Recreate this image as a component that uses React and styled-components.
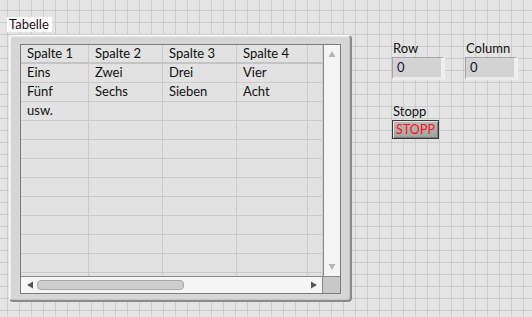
import styled, { createGlobalStyle } from "styled-components";

const GlobalStyle = createGlobalStyle`
  html, body {
    margin: 0;
    padding: 0;
  }
  body {
    width: 532px;
    height: 317px;
    overflow: hidden;
    background-color: #e4e4e4;
    background-image:
      linear-gradient(to right, #cdcdcd 1px, transparent 1px),
      linear-gradient(to bottom, #cdcdcd 1px, transparent 1px);
    background-size: 12px 12px;
    background-position: 7px 10px;
    font-family: Lato, "Liberation Sans", sans-serif;
    font-size: 13px;
    color: #111;
  }
`;

const columns = ["Spalte 1", "Spalte 2", "Spalte 3", "Spalte 4"];
const rows = [
  ["Eins", "Zwei", "Drei", "Vier"],
  ["Fünf", "Sechs", "Sieben", "Acht"],
  ["usw.", "", "", ""],
  ...Array.from({ length: 9 }, () => ["", "", "", ""]),
];
const widths = [68, 74, 74, 71, 15];

export default function App() {
  return (
    <Panel>
      <GlobalStyle />
      <TableColumn>
        <Caption>Tabelle</Caption>
        <Frame>
          <Inner>
            <Body>
              <Cells>
                <Row $header>
                  {widths.map((w, i) => (
                    <Cell key={i} style={{ width: w }}>{columns[i] || ""}</Cell>
                  ))}
                </Row>
                {rows.map((r, ri) => (
                  <Row key={ri}>
                    {widths.map((w, i) => (
                      <Cell key={i} style={{ width: w }}>{r[i] || ""}</Cell>
                    ))}
                  </Row>
                ))}
              </Cells>
              <VScroll>
                <Arrow viewBox="0 0 8 8" width="8" height="8" $c="#b4b4b4">
                  <path d="M4 1 L7.5 7 L0.5 7 Z" />
                </Arrow>
                <Arrow viewBox="0 0 8 8" width="8" height="8" $c="#b4b4b4">
                  <path d="M0.5 1 L7.5 1 L4 7 Z" />
                </Arrow>
              </VScroll>
            </Body>
            <Bottom>
              <HScroll>
                <Arrow viewBox="0 0 8 8" width="8" height="8" $c="#555">
                  <path d="M1 4 L7 0.5 L7 7.5 Z" />
                </Arrow>
                <Thumb />
                <Spacer />
                <Arrow viewBox="0 0 8 8" width="8" height="8" $c="#555">
                  <path d="M7 4 L1 0.5 L1 7.5 Z" />
                </Arrow>
              </HScroll>
              <Corner />
            </Bottom>
          </Inner>
        </Frame>
      </TableColumn>

      <Controls>
        <Indicators>
          <Field>
            <Label>Row</Label>
            <NumBox>0</NumBox>
          </Field>
          <Field>
            <Label>Column</Label>
            <NumBox>0</NumBox>
          </Field>
        </Indicators>
        <Field $top={23}>
          <Label>Stopp</Label>
          <StopButton>STOPP</StopButton>
        </Field>
      </Controls>
    </Panel>
  );
}

const Panel = styled.div`
  display: flex;
  align-items: flex-start;
  padding: 17px 0 0 7px;
`;

const TableColumn = styled.div`
  display: flex;
  flex-direction: column;
  align-items: flex-start;
`;

const Caption = styled.div`
  background: #fff;
  height: 15px;
  line-height: 15px;
  padding: 0 3px 0 2px;
  color: #1a0a1a;
`;

const Frame = styled.div`
  margin: 3px 0 0 2px;
  width: 343px;
  height: 267px;
  box-sizing: border-box;
  background: #d6d6d6;
  border-radius: 4px;
  border-top: 1px solid #fafafa;
  border-left: 1px solid #fafafa;
  border-right: 2px solid #8a8a8a;
  border-bottom: 2px solid #8a8a8a;
  box-shadow: inset -1px -1px 0 #c4c4c4, inset 1px 1px 0 #e8e8e8;
  padding: 8px 9px 6px 10px;
`;

const Inner = styled.div`
  display: flex;
  flex-direction: column;
  height: 100%;
  border: 1px solid #7c7c7c;
  box-sizing: border-box;
  background: #e2e2e2;
`;

const Body = styled.div`
  display: flex;
  flex: 1;
  min-height: 0;
`;

const Cells = styled.div`
  flex: 1;
  overflow: hidden;
`;

const Row = styled.div`
  display: flex;
  height: ${(p) => (p.$header ? 17 : 18)}px;
  border-bottom: ${(p) => (p.$header ? "2px solid #c4c4c4" : "1px solid #cbcbcb")};
`;

const Cell = styled.div`
  box-sizing: border-box;
  flex-shrink: 0;
  border-right: 1px solid #cbcbcb;
  padding-left: 6px;
  line-height: 17px;
  white-space: nowrap;
  overflow: hidden;
`;

const VScroll = styled.div`
  width: 16px;
  flex-shrink: 0;
  background: #f5f5f5;
  border-left: 1px solid #8a8a8a;
  display: flex;
  flex-direction: column;
  align-items: center;
  justify-content: space-between;
  padding: 5px 0 5px;
`;

const Arrow = styled.svg`
  flex-shrink: 0;
  fill: ${(p) => p.$c};
`;

const Bottom = styled.div`
  display: flex;
  height: 16px;
  border-top: 1px solid #8a8a8a;
  flex-shrink: 0;
`;

const HScroll = styled.div`
  flex: 1;
  display: flex;
  align-items: center;
  background: #f5f5f5;
  padding: 0 4px 0 5px;
  gap: 3px;
`;

const Thumb = styled.div`
  width: 147px;
  height: 10px;
  box-sizing: border-box;
  background: #cecece;
  border: 1px solid #a8a8a8;
  border-radius: 4px;
`;

const Spacer = styled.div`
  flex: 1;
`;

const Corner = styled.div`
  width: 17px;
  background: #c8c8c8;
  border-left: 1px solid #8a8a8a;
`;

const Controls = styled.div`
  display: flex;
  flex-direction: column;
  margin: 23px 0 0 40px;
`;

const Indicators = styled.div`
  display: flex;
  gap: 20px;
`;

const Field = styled.div`
  display: flex;
  flex-direction: column;
  align-items: flex-start;
  margin-top: ${(p) => p.$top || 0}px;
`;

const Label = styled.div`
  line-height: 16px;
  padding-left: 1px;
`;

const NumBox = styled.div`
  margin-top: 1px;
  width: 53px;
  height: 23px;
  box-sizing: border-box;
  background: #d3d3d3;
  border-top: 1px solid #a4a4a4;
  border-left: 1px solid #a4a4a4;
  border-right: 4px solid #efefef;
  border-bottom: 3px solid #ebebeb;
  padding-left: 4px;
  line-height: 19px;
  color: #1a1030;
`;

const StopButton = styled.div`
  margin-top: 1px;
  width: 47px;
  height: 19px;
  box-sizing: border-box;
  border: 1px solid #3a3a3a;
  background: linear-gradient(#b8b8b8, #a2a2a2);
  box-shadow: inset 1px 1px 0 #e4e4e4, inset -1px -1px 0 #7a7a7a;
  color: #ff1414;
  text-align: center;
  line-height: 17px;
  font-size: 12.5px;
`;
